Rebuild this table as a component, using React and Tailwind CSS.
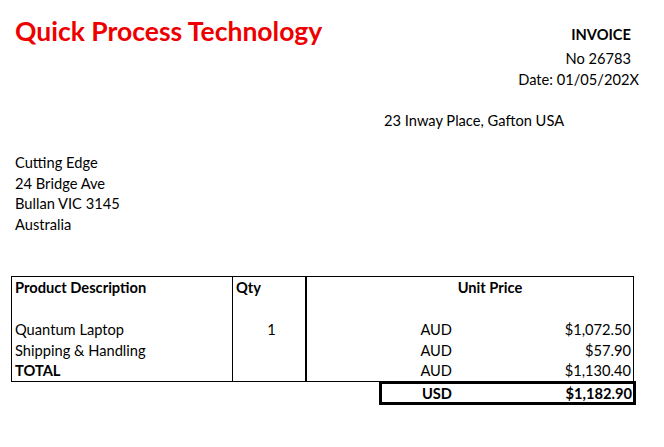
import React from "react";

const F = "font-['Lato','Liberation_Sans',sans-serif]";

function Row({ children, className = "" }) {
  return <div className={`h-[20.75px] pt-[1px] leading-[20.75px] ${className}`}>{children}</div>;
}

export default function App() {
  return (
    <div className={`w-[664px] h-[447px] bg-white text-black text-[14.67px] ${F} overflow-hidden`}>
      {/* header */}
      <div className="h-[48px] flex justify-between">
        <div className="pl-[15px] pt-[14px] text-[26.5px] leading-[34px] font-bold text-[#ee0000]">
          Quick Process Technology
        </div>
        <div className="pr-[33px] pt-[25px] leading-[20px] font-bold">INVOICE</div>
      </div>
      <Row className="text-right pr-[33px]">No 26783</Row>
      <Row className="text-right pr-[25px]">Date: 01/05/202X</Row>
      <Row />
      <Row className="pl-[384px]">23 Inway Place, Gafton USA</Row>
      <Row />
      <div className="pl-[15px]">
        <Row>Cutting Edge</Row>
        <Row>24 Bridge Ave</Row>
        <Row>Bullan VIC 3145</Row>
        <Row>Australia</Row>
      </div>
      <div className="h-[41.5px]" />

      {/* table */}
      <div className="ml-[11px] w-[623px] border border-black grid grid-cols-[221px_74px_1fr]">
        <div className="border-r border-black pl-[3px]">
          <Row className="font-bold">Product Description</Row>
          <Row />
          <Row>Quantum Laptop</Row>
          <Row>Shipping &amp; Handling</Row>
          <Row className="font-bold">TOTAL</Row>
        </div>
        <div className="border-r-2 border-black">
          <Row className="font-bold pl-[3px]">Qty</Row>
          <Row />
          <Row className="text-center pl-[5px]">1</Row>
          <Row />
          <Row />
        </div>
        <div>
          <Row className="font-bold text-center pl-[40px]">Unit Price</Row>
          <Row />
          {["$1,072.50", "$57.90", "$1,130.40"].map((v) => (
            <Row key={v} className="flex">
              <div className="w-[145px] text-right">AUD</div>
              <div className="flex-1 text-right pr-[2px]">{v}</div>
            </Row>
          ))}
        </div>
      </div>
      <div className="ml-[379px] w-[257px] -mt-[1px] border-[3px] border-black h-[24px] flex font-bold leading-[19px]">
        <div className="w-[70px] text-right">USD</div>
        <div className="flex-1 text-right pr-[1px]">$1,182.90</div>
      </div>
    </div>
  );
}
